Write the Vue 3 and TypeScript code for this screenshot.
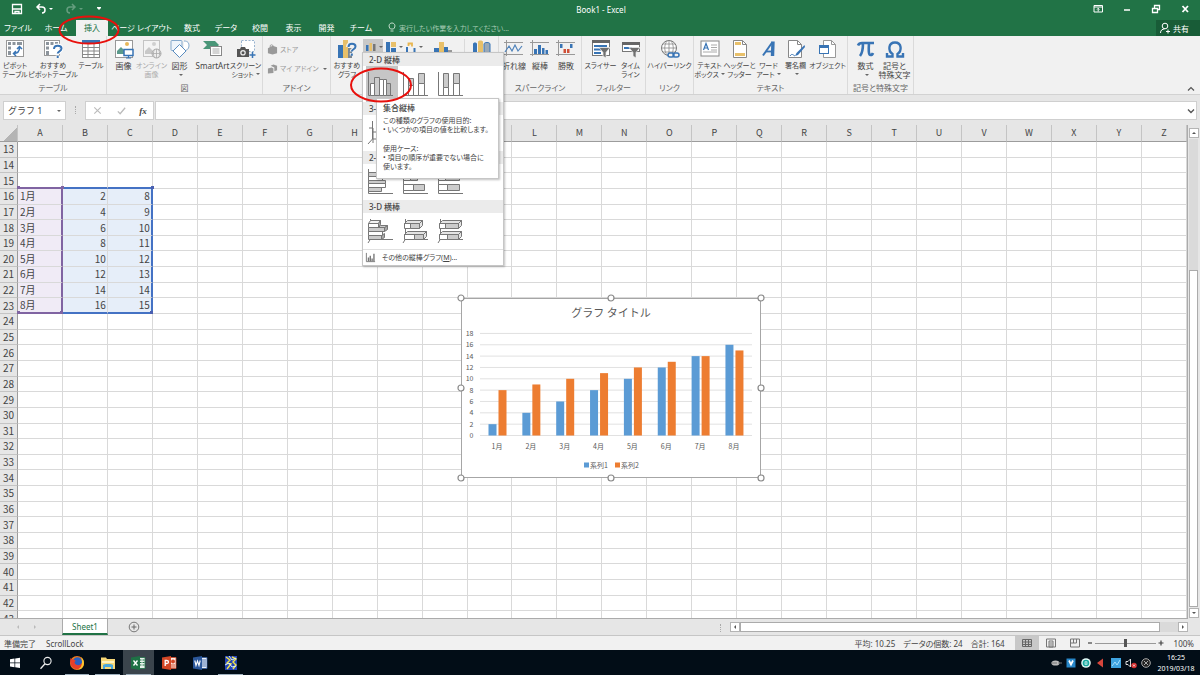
<script setup lang="ts">
import { ref } from 'vue'

interface Tool {
  icon: string
  lines: string[]
  size: string
  caret?: boolean
  muted?: boolean
  small?: boolean
}
interface Group {
  label: string
  tools: Tool[]
}

const tabs = ['ファイル', 'ホーム', '挿入', 'ページ レイアウト', '数式', 'データ', '校閲', '表示', '開発', 'チーム']

const leftGroups: Group[] = [
  {
    label: 'テーブル',
    tools: [
      { icon: 'pivot', lines: ['ピボット', 'テーブル'], size: 'w30', small: true },
      { icon: 'pivot-help', lines: ['おすすめ', 'ピボットテーブル'], size: 'w46', small: true },
      { icon: 'table', lines: ['テーブル'], size: 'w30', small: true },
    ],
  },
  {
    label: '図',
    tools: [
      { icon: 'picture', lines: ['画像'], size: 'w28' },
      { icon: 'online', lines: ['オンライン', '画像'], size: 'w28', muted: true, small: true },
      { icon: 'shapes', lines: ['図形', ''], size: 'w28', caret: true },
      { icon: 'smartart', lines: ['SmartArt'], size: 'w38' },
      { icon: 'shot', lines: ['スクリーン', 'ショット'], size: 'w28', caret: true, small: true },
    ],
  },
]

const rightGroups: Group[] = [
  {
    label: 'スパークライン',
    tools: [
      { icon: 'spark-line', lines: ['折れ線'], size: 'w26' },
      { icon: 'spark-bar', lines: ['縦棒'], size: 'w26' },
      { icon: 'spark-win', lines: ['勝敗'], size: 'w26' },
    ],
  },
  {
    label: 'フィルター',
    tools: [
      { icon: 'slicer', lines: ['スライサー'], size: 'w34', small: true },
      { icon: 'timeline', lines: ['タイム', 'ライン'], size: 'w26', small: true },
    ],
  },
  { label: 'リンク', tools: [{ icon: 'link', lines: ['ハイパーリンク'], size: 'w46', small: true }] },
  {
    label: 'テキスト',
    tools: [
      { icon: 'textbox', lines: ['テキスト', 'ボックス'], size: 'w30', caret: true, small: true },
      { icon: 'header', lines: ['ヘッダーと', 'フッター'], size: 'w30', small: true },
      { icon: 'wordart', lines: ['ワード', 'アート'], size: 'w28', caret: true, small: true },
      { icon: 'sign', lines: ['署名欄', ''], size: 'w26', caret: true, small: true },
      { icon: 'object', lines: ['オブジェクト'], size: 'w38', small: true },
    ],
  },
  {
    label: '記号と特殊文字',
    tools: [
      { icon: 'pi', lines: ['数式', ''], size: 'w28', caret: true },
      { icon: 'omega', lines: ['記号と', '特殊文字'], size: 'w30' },
    ],
  },
]

const menuSections = [
  { title: '2-D 縦棒', icons: ['col-cluster', 'col-stack', 'col-full'] },
  { title: '3-D 縦棒', icons: ['col3d'] },
  { title: '2-D 横棒', icons: ['row-cluster', 'row-stack', 'row-full'] },
  { title: '3-D 横棒', icons: ['row3d-cluster', 'row3d-stack', 'row3d-full'] },
]

const columns = 'ABCDEFGHIJKLMNOPQRSTUVWXYZ'.split('')
const rows = Array.from({ length: 31 }, (_, i) => i + 13)

const months = ['1月', '2月', '3月', '4月', '5月', '6月', '7月', '8月']
const seriesA = [2, 4, 6, 8, 10, 12, 14, 16]
const seriesB = [8, 9, 10, 11, 12, 13, 14, 15]

function cellText(row: number, col: string): string {
  const i = row - 16
  if (i < 0 || i >= months.length) return ''
  if (col === 'A') return months[i]
  if (col === 'B') return String(seriesA[i])
  if (col === 'C') return String(seriesB[i])
  return ''
}

function cellClass(row: number, col: string): string[] {
  const out: string[] = []
  if (!'ABC'.includes(col)) return out
  const cat = col === 'A'
  if (row >= 16 && row <= 23) {
    out.push(cat ? 'cat' : 'val')
    if (col === 'A') out.push('edge-cat')
    if (col === 'C') out.push('edge-val')
  }
  if (row === 15 || row === 23) {
    out.push(cat ? 'line-cat' : 'line-val')
    if (col !== 'B') out.push('knob')
    if (cat) out.push('knob-left')
  }
  return out
}

const ticks = [0, 2, 4, 6, 8, 10, 12, 14, 16, 18]
const base = 137.5
const unit = 5.67
const step = 33.85
const handles = [
  [4, 4], [154, 4], [304, 4], [4, 94], [304, 94], [4, 184], [154, 184], [304, 184],
]

const formula = ref('')
const zoom = ref(50)
const query = ref('')
const apps = [
  { id: 'start', state: '' },
  { id: 'search', state: '' },
  { id: 'firefox', state: 'open' },
  { id: 'explorer', state: 'open' },
  { id: 'excel', state: 'active' },
  { id: 'powerpoint', state: '' },
  { id: 'word', state: '' },
  { id: 'mosaic', state: 'open' },
]
const tray = ['t-plug', 't-v', 't-e', 't-arrow', 't-blue', 't-sound', 't-x']
</script>

<template>
  <div class="app">
    <svg class="sprite" aria-hidden="true">
      <symbol id="pivot" viewBox="0 0 20 20">
        <rect x="1.5" y="1.5" width="17" height="16" fill="#fff" stroke="#999" />
        <path d="M3 3h3v3H3zM7.500 3h3v3h-3zM12 3h5v3h-5zM3 7.500h3v3H3zM3 12h3v4H3z" fill="#8c949c" />
        <path d="M8.500 14.500c4 0 6-2 6-6M12 10l2.500-2.500L17 10M11 12l-2.500 2.500L11 17" fill="none" stroke="#3874b5" stroke-width="1.500" />
      </symbol>
      <symbol id="pivot-help" viewBox="0 0 20 20">
        <rect x="1.500" y="1.500" width="15" height="15" fill="#fff" stroke="#999" />
        <path d="M3 3h3v3H3zM7.500 3h3v3h-3zM12 3h3v3h-3zM3 7.500h3v3H3zM3 12h3v4H3z" fill="#8c949c" />
        <path d="M10.500 10c0-5 8-4.500 8-.5 0 3-3.800 2.800-3.800 5.500M14.700 16.500v2.500" fill="none" stroke="#fff" stroke-width="4" />
        <path d="M11 10c0-4.500 7.500-4 7.500-.5 0 3-3.800 2.500-3.800 5M14.700 16.800v2.200" fill="none" stroke="#3874b5" stroke-width="2" />
      </symbol>
      <symbol id="table" viewBox="0 0 20 20">
        <rect x="1.500" y="1.500" width="17" height="17" fill="#fff" stroke="#888" />
        <path d="M1 1h18v4H1z" fill="#3874b5" />
        <path d="M1 8.500h18M1 12h18M1 15.500h18M7 5v14M13 5v14" stroke="#888" />
      </symbol>
      <symbol id="picture" viewBox="0 0 20 20">
        <rect x="1.500" y="1.500" width="17" height="17" fill="#fff" stroke="#999" />
        <path d="M3 15V12l4-4 5 5v2z" fill="#5b9a8b" />
        <circle cx="13" cy="5" r="2" fill="#e8b75a" />
        <rect x="10" y="10.500" width="9" height="6" fill="#fff" stroke="#3874b5" stroke-width="1.500" />
        <path d="M14.500 16v2.500M12 19h5" stroke="#3874b5" stroke-width="1.200" />
      </symbol>
      <symbol id="online" viewBox="0 0 20 20">
        <rect x="1.500" y="1.500" width="16" height="16" fill="#f4f4f4" stroke="#c4c4c4" />
        <path d="M3 15V12l4-4 6 6v1z" fill="#c8c8c8" />
        <circle cx="12" cy="5" r="2" fill="#d0d0d0" />
        <circle cx="14.500" cy="14.500" r="4.500" fill="#eee" stroke="#aaa" />
        <path d="M10 14.500h9M14.500 10v9M12.500 10.500c-1.500 3-1.500 5 0 8M16.500 10.500c1.500 3 1.500 5 0 8" fill="none" stroke="#aaa" stroke-width=".8" />
      </symbol>
      <symbol id="shapes" viewBox="0 0 20 20">
        <rect x="1" y="1.500" width="11" height="10" rx="1" fill="#eef4fa" stroke="#85a9cc" />
        <path d="M14 2c4 0 5 2 5 5s-3 5-5 5" fill="#fff" stroke="#85a9cc" />
        <path d="m9.500 5.500 6.500 6.500-6.500 6.500L3 12z" fill="#fff" stroke="#5b8dc0" />
      </symbol>
      <symbol id="smartart" viewBox="0 0 20 20">
        <path d="M0 2h12l4 4-4 4H0l4-4z" fill="#4a9678" />
        <rect x="7.500" y="7.500" width="11" height="9" fill="#fff" stroke="#888" />
        <path d="M9.500 10h7M9.500 12h7M9.500 14h7" stroke="#aaa" />
      </symbol>
      <symbol id="shot" viewBox="0 0 20 20">
        <rect x="5.500" y="1.500" width="13" height="11" fill="#fff" stroke="#9ab4d0" stroke-dasharray="2 1.500" />
        <path d="M1 10h3l1-2h4l1 2h3v8H1z" fill="#555" />
        <circle cx="7" cy="13.700" r="2.800" fill="#eee" />
        <circle cx="7" cy="13.700" r="1.500" fill="#555" />
        <path d="M16.500 13v6M13.500 16h6" stroke="#3874b5" stroke-width="1.500" />
      </symbol>
      <symbol id="store" viewBox="0 0 12 12">
        <path d="M1 4.500 6 2l5 1.500V10L6 11.500 1 10z" fill="#999" />
        <path d="M3.500 4V2c0-1.500 3-1.500 3 0v1" fill="none" stroke="#999" />
      </symbol>
      <symbol id="addin" viewBox="0 0 12 12">
        <path d="M1 6 5 5l2 1v5l-6 .5zM4 3l3-1.500 4 1.500v5l-3 1V5z" fill="#999" />
      </symbol>
      <symbol id="chart-help" viewBox="0 0 20 20">
        <path d="M1 6h5v13H1z" fill="#3874b5" />
        <path d="M6 1h5v18H6z" fill="#e8c06a" />
        <path d="M11 9h4v10h-4z" fill="#7d8790" />
        <path d="M11 8c0-5 7.500-4.500 7.500-.5 0 3-3.700 2.500-3.700 5M14.800 14v2.500" fill="none" stroke="#f1f1f1" stroke-width="4" />
        <path d="M11.500 8c0-4.500 7-4 7-.5 0 3-3.700 2.500-3.700 5M14.800 14.500v2.300" fill="none" stroke="#3874b5" stroke-width="2" />
      </symbol>
      <symbol id="mini-col" viewBox="0 0 12 12">
        <path d="M1 4h2.500v6H1z" fill="#3874b5" /><path d="M4.500 2H7v8H4.500z" fill="#e8c06a" /><path d="M8 3h2.500v7H8z" fill="#777" />
      </symbol>
      <symbol id="mini-tree" viewBox="0 0 12 12">
        <path d="M1 1h4v10H1z" fill="#3874b5" /><path d="M6 1h5v5H6z" fill="#e8c06a" /><path d="M6 7h5v4H6z" fill="#3874b5" />
      </symbol>
      <symbol id="mini-fall" viewBox="0 0 12 12">
        <path d="M1 6h2v5H1z" fill="#3874b5" /><path d="M3.500 5V2.500H7v3" fill="none" stroke="#e8b650" stroke-width="1.800" /><path d="M8.500 7h2v4h-2z" fill="#3874b5" />
      </symbol>
      <symbol id="big-chart" viewBox="0 0 20 20">
        <path d="M1 9h5v6H1z" fill="#3874b5" /><path d="M6 3h5v12H6z" fill="#e8c06a" /><path d="M11 8h4v7h-4z" fill="#3874b5" /><path d="M15 11h4v4h-4z" fill="#999" />
      </symbol>
      <symbol id="map3d" viewBox="0 0 20 20">
        <path d="M1 5c0-2 4-2 4 0v10H1z" fill="#3874b5" /><path d="M6 3c0-2 5-2 5 0v12H6z" fill="#e8c06a" /><path d="M12 5c0-2 6-2 6 0v10h-6z" fill="#9aa9b8" stroke="#3874b5" />
      </symbol>
      <symbol id="spark-line" viewBox="0 0 20 20">
        <path d="M2.500 1v16M0 3.500h19M0 15.500h19" stroke="#999" fill="none" />
        <path d="M1 13l4-6 3 5 3-6 3 6 4-5" fill="none" stroke="#4f83bb" stroke-width="1.200" />
      </symbol>
      <symbol id="spark-bar" viewBox="0 0 20 20">
        <path d="M2.500 1v16M0 3.500h19M0 15.500h19" stroke="#999" />
        <path d="M4 10h3v5H4zM8 6h3v9H8zM12 9h2.500v6H12zM15.500 11h2.500v4h-2.500z" fill="#3874b5" />
      </symbol>
      <symbol id="spark-win" viewBox="0 0 20 20">
        <path d="M2.500 1v16M0 3.500h19M0 15.500h19" stroke="#999" />
        <path d="M4 5h2.500v4H4zM14 5h2.500v4H14z" fill="#3874b5" /><path d="M7.500 10H10v4H7.500zM11 10h2.500v4H11z" fill="#d05038" />
      </symbol>
      <symbol id="slicer" viewBox="0 0 20 20">
        <rect x="1.500" y="1.500" width="17" height="15" fill="#fff" stroke="#777" />
        <path d="M1 1h18v3H1z" fill="#666" /><path d="M3 6h13v2H3zM3 9.500h7v2H3zM3 13h7v2H3z" fill="#3874b5" />
        <path d="M8 8.500h11l-4 5V19l-3-2v-3.500z" fill="#707070" stroke="#f1f1f1" stroke-width=".7" />
      </symbol>
      <symbol id="timeline" viewBox="0 0 20 20">
        <rect x="1.500" y="3.500" width="17" height="9" fill="#fff" stroke="#777" />
        <path d="M1 3h18v3H1z" fill="#666" /><path d="M3 8h8v2H3z" fill="#3874b5" />
        <path d="M8 8.500h11l-4 5V19l-3-2v-3.500z" fill="#707070" stroke="#f1f1f1" stroke-width=".7" />
      </symbol>
      <symbol id="link" viewBox="0 0 20 20">
        <circle cx="9" cy="9" r="7.500" fill="#fff" stroke="#777" />
        <path d="M1.500 9h15M9 1.500v15M3 5h12M3 13h12M7 2c-3 4-3 10 0 14M11 2c3 4 3 10 0 14" fill="none" stroke="#888" stroke-width=".8" />
        <rect x="8" y="14" width="6" height="4" rx="2" fill="#f1f1f1" stroke="#3874b5" stroke-width="1.500" />
        <rect x="13" y="14" width="6" height="4" rx="2" fill="none" stroke="#3874b5" stroke-width="1.500" />
      </symbol>
      <symbol id="textbox" viewBox="0 0 20 20">
        <rect x="1" y="2" width="18" height="15" fill="#fff" stroke="#888" />
        <path d="M3.500 11 6 4.500 8.500 11M4.500 9h3" fill="none" stroke="#3874b5" stroke-width="1.200" />
        <path d="M11 6h6M11 8.500h6M11 11h6M3 13h14" stroke="#aaa" />
      </symbol>
      <symbol id="header" viewBox="0 0 20 20">
        <path d="M3.500 1.500h9l4 4v13h-13z" fill="#fff" stroke="#888" /><path d="M12.500 1.500v4h4" fill="none" stroke="#888" />
        <path d="M5 3h6v3H5zM5 14h10v3H5z" fill="#e8c06a" />
      </symbol>
      <symbol id="wordart" viewBox="0 0 20 20">
        <path d="M4 16.500 13.500 3" fill="none" stroke="#3874b5" stroke-width="2" /><path d="M14 2.500 13.500 17" fill="none" stroke="#3874b5" stroke-width="3.400" /><path d="M7 12.500h6" stroke="#3874b5" stroke-width="1.800" />
      </symbol>
      <symbol id="sign" viewBox="0 0 20 20">
        <path d="M2.500 1.500h9l4 4v13h-13z" fill="#fff" stroke="#888" /><path d="M11.500 1.500v4h4" fill="none" stroke="#888" />
        <path d="m18.500 6-8 8-1.500 3 3-1 7-8z" fill="#3874b5" /><path d="M4 17c2-3 3-1 5 0" fill="none" stroke="#3874b5" />
      </symbol>
      <symbol id="object" viewBox="0 0 20 20">
        <path d="M5.500 1.500h8l4 4v13h-12z" fill="#fff" stroke="#999" /><path d="M13.500 1.500v4h4" fill="none" stroke="#999" />
        <rect x="1.500" y="6.500" width="9" height="8" fill="#fff" stroke="#3874b5" /><path d="M1 6h10v3H1z" fill="#3874b5" />
      </symbol>
      <symbol id="pi" viewBox="0 0 20 20">
        <path d="M2 6.500C3 4 4 4 6 4h12M7 4c0 6-.5 10-3 13M13 4c-.5 7-.5 12 1.500 12 1 0 2-.5 2.500-2" fill="none" stroke="#3874b5" stroke-width="2.600" />
      </symbol>
      <symbol id="omega" viewBox="0 0 20 20">
        <path d="M2 14v3.500h5.500V15C3 12 3 3.500 10 3.500S17 12 12.500 15v2.500H18V14" fill="none" stroke="#3874b5" stroke-width="2.400" />
      </symbol>
      <symbol id="col-cluster" viewBox="0 0 28 28">
        <path d="M2.500 2v23.500H27" fill="none" stroke="#777" />
        <path d="M4.500 13.500h4v12h-4zM13.500 9.500h4v16h-4z" fill="#fff" stroke="#777" />
        <path d="M8.500 7.500h5v18h-5z" fill="#ccc" stroke="#777" /><path d="M17.500 9.500h3v16h-3z" fill="#fff" stroke="#777" /><path d="M20.500 13.500h4v12h-4z" fill="#bbb" stroke="#777" />
      </symbol>
      <symbol id="col-stack" viewBox="0 0 28 28">
        <path d="M2.500 2v23.500H27" fill="none" stroke="#777" />
        <path d="M7.500 15.500h5v10h-5zM17.500 13.500h6v12h-6z" fill="#fff" stroke="#777" /><path d="M7.500 8.500h5v7h-5zM17.500 3.500h6v10h-6z" fill="#ccc" stroke="#777" />
      </symbol>
      <symbol id="col-full" viewBox="0 0 28 28">
        <path d="M2.500 2v23.500H27" fill="none" stroke="#777" />
        <path d="M7.500 17.500h5v8h-5zM17.500 13.500h6v12h-6z" fill="#fff" stroke="#777" /><path d="M7.500 3.500h5v14h-5zM17.500 3.500h6v10h-6z" fill="#ccc" stroke="#777" />
      </symbol>
      <symbol id="col3d" viewBox="0 0 28 28">
        <path d="M6.500 2v18L2 25M6.500 20H26M3 9h4v15M7 13h5v10" fill="none" stroke="#777" />
      </symbol>
      <symbol id="row-cluster" viewBox="0 0 28 28">
        <path d="M2.500 1v24.500H27" fill="none" stroke="#777" />
        <path d="M2.500 8.500h14v4h-14zM2.500 15.500h17v4h-17z" fill="#fff" stroke="#777" /><path d="M2.500 4.500h12v4h-12zM2.500 12.500h17v3h-17zM2.500 19.500h13v4h-13z" fill="#ccc" stroke="#777" />
      </symbol>
      <symbol id="row-stack" viewBox="0 0 28 28">
        <path d="M2.500 1v24.500H27" fill="none" stroke="#777" />
        <path d="M2.500 6.500h7v6h-7zM2.500 16.500h10v6h-10z" fill="#fff" stroke="#777" /><path d="M9.500 6.500h7v6h-7zM12.500 16.500h11v6h-11z" fill="#ccc" stroke="#777" />
      </symbol>
      <symbol id="row-full" viewBox="0 0 28 28">
        <path d="M2.500 1v24.500H27" fill="none" stroke="#777" />
        <path d="M2.500 6.500h7v6h-7zM2.500 16.500h9v6h-9z" fill="#fff" stroke="#777" /><path d="M9.500 6.500h14v6h-14zM11.500 16.500h12v6h-12z" fill="#ccc" stroke="#777" />
      </symbol>
      <symbol id="row3d-cluster" viewBox="0 0 28 28">
        <path d="M4.500 2v20L2 26M5 22.500h22" fill="none" stroke="#777" />
        <path d="m2.500 6.500 2-3h10l-2 3zM2.500 14.500l2-2h15l-3 2z" fill="#f4f4f4" stroke="#777" />
        <path d="m12.500 6.500 2-3v4l-2 3zM18.500 10.500l3-2v4l-3 2zM15.500 18.500l3-2v4l-3 2z" fill="#aaa" stroke="#777" />
        <path d="M2.500 6.500h10v4h-10zM2.500 14.500h14v4h-14z" fill="#fff" stroke="#777" />
        <path d="M2.500 10.500h16v4h-16zM2.500 18.500h13v4h-13zM12.500 10.500l2-2h7l-3 2z" fill="#ccc" stroke="#777" />
      </symbol>
      <symbol id="row3d-stack" viewBox="0 0 28 28">
        <path d="M4.500 2v20L2 26M5 22.500h22" fill="none" stroke="#777" />
        <path d="M3.500 6.500h6v5h-6zM3.500 17.500h10v5h-10z" fill="#fff" stroke="#777" /><path d="M9.500 6.500h9v5h-9zM13.500 17.500h9v5h-9z" fill="#ccc" stroke="#777" />
        <path d="m3.500 6.500 3-3h15l-3 3zm15 0 3-3v5l-3 3zM3.500 17.500l3-3h19l-3 3zm19 0 3-3v5l-3 3z" fill="#e4e4e4" stroke="#777" />
      </symbol>
      <symbol id="row3d-full" viewBox="0 0 28 28">
        <path d="M4.500 2v20L2 26M5 22.500h22" fill="none" stroke="#777" />
        <path d="M3.500 6.500h6v5h-6zM3.500 17.500h8v5h-8z" fill="#fff" stroke="#777" /><path d="M9.500 6.500h13v5h-13zM11.500 17.500h11v5h-11z" fill="#ccc" stroke="#777" />
        <path d="m3.500 6.500 3-3h19l-3 3zm19 0 3-3v5l-3 3zM3.500 17.500l3-3h19l-3 3zm19 0 3-3v5l-3 3z" fill="#e4e4e4" stroke="#777" />
      </symbol>
      <symbol id="more-chart" viewBox="0 0 12 12">
        <path d="M1.500 1v9.500H11" fill="none" stroke="#777" /><path d="M3 6h1.500v4H3zM5 4h1.500v6H5zM7 7h1.500v3H7zM9 2h1.500v8H9z" fill="#777" />
      </symbol>
      <symbol id="start" viewBox="0 0 16 16">
        <path d="m3 4.200 4.500-.7v4H3zM8.200 3.400 13 2.700v4.800H8.200zM3 8.200h4.500v4L3 11.500zM8.200 8.200H13V13l-4.800-.7z" fill="#fff" />
      </symbol>
      <symbol id="search" viewBox="0 0 16 16">
        <circle cx="9.500" cy="6" r="3.600" fill="none" stroke="#eee" stroke-width="1.100" /><path d="m7 8.700-4.500 5" stroke="#eee" stroke-width="1.300" />
      </symbol>
      <symbol id="firefox" viewBox="0 0 16 16">
        <circle cx="8" cy="8" r="7" fill="#f07a1c" /><circle cx="8.500" cy="6.800" r="4.600" fill="#2b5fc0" />
        <path d="M1.500 3C3 5 5 4 7 6c-2 0-2 3 1 4 2 .5 4-.5 5-2 0 4-3 6.500-6 6C2 13.500.5 8 1.500 3z" fill="#e8402a" /><path d="M12 2c4 3 4 9 0 12-1 0-2 .5-3 .5 4-2 5-7 3-12.500z" fill="#fcc52e" />
      </symbol>
      <symbol id="explorer" viewBox="0 0 16 16">
        <path d="M1 2.500h5l1 1.500h8v10H1z" fill="#f6d777" /><path d="M2 6h12v2H2z" fill="#fff3c0" /><path d="M3 14v-4c0-1.500 10-1.500 10 0v4h-2v-2H5v2z" fill="#4aa7dc" />
      </symbol>
      <symbol id="excel" viewBox="0 0 16 16">
        <path d="M8 2.500h7v11H8z" fill="#e6f1ea" stroke="#1e7145" stroke-width=".8" /><path d="M9.500 5h2M12.500 5h2M9.500 7.500h2M12.500 7.500h2M9.500 10h2M12.500 10h2" stroke="#1e7145" /><path d="m1 2.500 9-1.500v14l-9-1.500z" fill="#1e7145" /><path d="m3.500 5.500 4 5M7.500 5.500l-4 5" stroke="#fff" stroke-width="1.300" />
      </symbol>
      <symbol id="powerpoint" viewBox="0 0 16 16">
        <path d="M8 2.500h7v11H8z" fill="#fbeae5" stroke="#d24726" stroke-width=".8" /><circle cx="12" cy="6.500" r="2" fill="#d24726" /><path d="M10 10h4M10 12h4" stroke="#d24726" /><path d="m1 2.500 9-1.500v14l-9-1.500z" fill="#d24726" /><path d="M4.200 11V5.500h1.500c2.400 0 2.400 3 0 3H4.500" fill="none" stroke="#fff" stroke-width="1.300" />
      </symbol>
      <symbol id="word" viewBox="0 0 16 16">
        <path d="M8 2.500h7v11H8z" fill="#e8eef8" stroke="#2b579a" stroke-width=".8" /><path d="M10 5h4M10 7h4M10 9h4M10 11h4" stroke="#2b579a" stroke-width=".8" /><path d="m1 2.500 9-1.500v14l-9-1.500z" fill="#2b579a" /><path d="m2.800 5.500 1.200 5 1.500-4.500L7 10.500l1.200-5" fill="none" stroke="#fff" stroke-width="1.100" />
      </symbol>
      <symbol id="mosaic" viewBox="0 0 16 16">
        <path d="M2 1h12v14H2z" fill="#2443b8" /><path d="m3 2 4 3-3 3 4 1-4 5M9 2l4 2-3 3 3 3-3 4" fill="none" stroke="#f3e444" stroke-width="1.400" /><path d="m6 1 3 4 4-2M2 10l4-2 3 4 4-1" fill="none" stroke="#d8f0ff" />
      </symbol>
      <symbol id="t-plug" viewBox="0 0 12 12"><ellipse cx="5.500" cy="6" rx="4" ry="2.600" fill="#bbb" /><path d="M8 6h4M1 6h6" stroke="#777" /></symbol>
      <symbol id="t-v" viewBox="0 0 12 12"><path d="M1.500 1.500h9v9h-9z" fill="#2787c9" /><path d="m4 3.500 2 4 2-4" fill="none" stroke="#fff" stroke-width="1.700" /></symbol>
      <symbol id="t-e" viewBox="0 0 12 12"><circle cx="6" cy="6" r="4.800" fill="#e6fbf8" /><circle cx="6" cy="6" r="2.600" fill="none" stroke="#18a9a0" stroke-width="1.500" /><path d="M4 6h4" stroke="#18a9a0" /></symbol>
      <symbol id="t-arrow" viewBox="0 0 12 12"><path d="M2 6 8 1.500v9z" fill="#d8463c" /></symbol>
      <symbol id="t-blue" viewBox="0 0 12 12"><path d="M1 1h10v10H1z" fill="#3fa4e0" /><path d="m2 9 3-4 2 3 3-5" fill="none" stroke="#a5e0ff" /></symbol>
      <symbol id="t-sound" viewBox="0 0 12 12"><path d="M1 4.500h2L5.500 2v8L3 7.500H1z" fill="none" stroke="#ddd" /><circle cx="9" cy="8.500" r="2.800" fill="#d22c2c" /><path d="m8 7.500 2 2m0-2-2 2" stroke="#fff" stroke-width=".8" /></symbol>
      <symbol id="t-x" viewBox="0 0 12 12"><circle cx="6" cy="6" r="4.300" fill="#222" stroke="#aaa" /><path d="m4 4 4 4m0-4-4 4" stroke="#aaa" /></symbol>
    </svg>

    <header class="titlebar">
      <div class="quick">
        <button aria-label="上書き保存"><svg viewBox="0 0 12 12"><path d="M1.500 1.500h9v9h-9zM1.500 6h9M4 10V8.500h4V10" fill="none" stroke="#fff" stroke-width="1.300" /></svg></button>
        <button aria-label="元に戻す"><svg viewBox="0 0 12 12"><path d="M5 1 2 4l3 3M2 4h5c4 0 4 6 0 6" fill="none" stroke="#fff" stroke-width="1.500" /></svg><i class="caret light"></i></button>
        <button class="dim" aria-label="やり直し"><svg viewBox="0 0 12 12"><path d="m7 1 3 3-3 3M10 4H5C1 4 1 10 5 10" fill="none" stroke="#fff" stroke-width="1.500" /></svg><i class="caret light"></i></button>
        <button aria-label="カスタマイズ"><i class="caret light bar"></i></button>
      </div>
      <h1>Book1 - Excel</h1>
      <div class="window">
        <button aria-label="リボンの表示"><svg viewBox="0 0 12 12"><path d="M2 2.500h8.500v6.500H2zM2 4h8.500M6.200 8.500v-3M5 6.500l1.200-1.200 1.200 1.200" fill="none" stroke="#fff" /></svg></button>
        <button aria-label="最小化"><svg viewBox="0 0 12 12"><path d="M3 7h6" stroke="#fff" stroke-width="1.500" /></svg></button>
        <button aria-label="元のサイズ"><svg viewBox="0 0 12 12"><path d="M2.500 5.500h5v4h-5zM4.500 5V2.500h5v4H8" fill="none" stroke="#fff" stroke-width="1.300" /></svg></button>
        <button aria-label="閉じる"><svg viewBox="0 0 12 12"><path d="m3.500 3 5.500 6M9 3 3.500 9" stroke="#fff" stroke-width="1.800" /></svg></button>
      </div>
    </header>

    <nav class="tabs">
      <button v-for="tab in tabs" :key="tab" :class="{ current: tab === '挿入' }">{{ tab }}</button>
      <label class="tell">
        <svg viewBox="0 0 10 12"><path d="M3.500 8C1 5.500 2 2 5 2s4 3.500 1.500 6zM3.500 10h3" fill="none" stroke="#c2dccb" /></svg>
        <input v-model="query" aria-label="操作アシスト" placeholder="実行したい作業を入力してください..." />
      </label>
      <button class="share"><svg viewBox="0 0 12 12"><circle cx="6" cy="4" r="2.800" fill="none" stroke="#fff" /><path d="M1.500 11c0-3 2-4 4-4M7 9.500h4M9 7.500v4" fill="none" stroke="#fff" /></svg>共有</button>
    </nav>

    <section class="ribbon">
      <div v-for="group in leftGroups" :key="group.label" class="group">
        <div class="tools">
          <button v-for="tool in group.tools" :key="tool.icon" class="tool" :class="[tool.size, { muted: tool.muted, small: tool.small }]">
            <svg><use :href="'#' + tool.icon" /></svg>
            <span v-for="(line, n) in tool.lines" :key="n">{{ line }}<i v-if="tool.caret && n === tool.lines.length - 1" class="caret"></i></span>
          </button>
        </div>
        <h2>{{ group.label }}</h2>
      </div>
      <div class="group">
        <div class="stack">
          <button><svg><use href="#store" /></svg>ストア</button>
          <button><svg><use href="#addin" /></svg>マイ アドイン<i class="caret"></i></button>
        </div>
        <h2>アドイン</h2>
      </div>
      <div class="group charts">
        <div class="tools">
          <button class="tool small w34"><svg><use href="#chart-help" /></svg><span>おすすめ</span><span>グラフ</span></button>
          <div class="minis">
            <button class="pressed" aria-label="縦棒/横棒グラフ"><svg><use href="#mini-col" /></svg><i class="caret"></i></button>
            <button aria-label="階層構造グラフ"><svg><use href="#mini-tree" /></svg><i class="caret"></i></button>
            <button aria-label="ウォーターフォール図"><svg><use href="#mini-fall" /></svg><i class="caret"></i></button>
          </div>
          <button class="tool w34" aria-label="ピボットグラフ"><svg><use href="#big-chart" /></svg></button>
          <button class="tool w34 split" aria-label="3D マップ"><svg><use href="#map3d" /></svg></button>
        </div>
      </div>
      <div v-for="group in rightGroups" :key="group.label" class="group">
        <div class="tools">
          <button v-for="tool in group.tools" :key="tool.icon" class="tool" :class="[tool.size, { small: tool.small }]">
            <svg><use :href="'#' + tool.icon" /></svg>
            <span v-for="(line, n) in tool.lines" :key="n">{{ line }}<i v-if="tool.caret && n === tool.lines.length - 1" class="caret"></i></span>
          </button>
        </div>
        <h2>{{ group.label }}</h2>
      </div>
      <button class="fold" aria-label="リボンを折りたたむ"><svg viewBox="0 0 10 10"><path d="m2 6.500 3-3 3 3" fill="none" stroke="#555" stroke-width="1.200" /></svg></button>
    </section>

    <section class="formula">
      <button class="namebox">グラフ 1<i class="caret"></i></button>
      <span class="grip"></span>
      <div class="fx">
        <button aria-label="キャンセル"><svg viewBox="0 0 12 12"><path d="m2.500 2.500 7 7m0-7-7 7" stroke="#bbb" stroke-width="1.200" /></svg></button>
        <button aria-label="入力"><svg viewBox="0 0 12 12"><path d="m2 7 2.500 2.500L10 3" fill="none" stroke="#bbb" stroke-width="1.400" /></svg></button>
        <button aria-label="関数の挿入"><em>fx</em></button>
      </div>
      <div class="entry">
        <input v-model="formula" aria-label="数式バー" />
        <svg viewBox="0 0 10 10"><path d="m2 3.500 3 3 3-3" fill="none" stroke="#555" stroke-width="1.400" /></svg>
      </div>
    </section>

    <main class="work">
      <div class="sheet">
        <table>
          <thead>
            <tr>
              <th class="corner"></th>
              <th v-for="col in columns" :key="col" scope="col">{{ col }}</th>
            </tr>
          </thead>
          <tbody>
            <tr v-for="row in rows" :key="row">
              <th scope="row">{{ row }}</th>
              <td v-for="col in columns" :key="col" :class="cellClass(row, col)">{{ cellText(row, col) }}</td>
            </tr>
          </tbody>
        </table>

        <svg class="chart" viewBox="0 0 308 188" role="img" aria-label="グラフ タイトル">
          <rect x="4.500" y="4.500" width="299" height="179" fill="#fff" stroke="#a6a6a6" />
          <text x="154" y="23" class="chart-title">グラフ タイトル</text>
          <g transform="translate(4 4)">
            <g v-for="t in ticks" :key="t">
              <path :d="`M19 ${base - t * unit}h272`" stroke="#d9d9d9" stroke-width="0.8" />
              <text x="12.500" :y="base - t * unit + 2.5" class="tick">{{ t }}</text>
            </g>
            <g v-for="(m, i) in months" :key="m">
              <rect :x="27.5 + i * step" :y="base - seriesA[i] * unit" width="8" :height="seriesA[i] * unit" fill="#5b9bd5" />
              <rect :x="37.5 + i * step" :y="base - seriesB[i] * unit" width="8" :height="seriesB[i] * unit" fill="#ed7d31" />
              <text :x="36 + i * step" y="151" class="month">{{ m }}</text>
            </g>
            <rect x="123" y="164.500" width="5" height="5" fill="#5b9bd5" />
            <text x="129" y="169.500" class="legend">系列1</text>
            <rect x="154" y="164.500" width="5" height="5" fill="#ed7d31" />
            <text x="160" y="169.500" class="legend">系列2</text>
          </g>
          <circle v-for="(h, i) in handles" :key="i" :cx="h[0]" :cy="h[1]" r="3" fill="#fff" stroke="#8a8a8a" stroke-width="1.200" />
        </svg>
      </div>
      <div class="vscroll">
        <button aria-label="上へ"><i class="up"></i></button>
        <div class="vtrack"><div class="vthumb"></div></div>
        <button aria-label="下へ"><i class="down"></i></button>
      </div>
    </main>

    <section class="sheetbar">
      <div class="steps"><i class="left pale"></i><i class="right pale"></i></div>
      <button class="sheet-tab">Sheet1</button>
      <button class="add" aria-label="新しいシート"><svg viewBox="0 0 12 12"><circle cx="6" cy="6" r="4.800" fill="none" stroke="#777" /><path d="M3.500 6h5M6 3.500v5" stroke="#666" /></svg></button>
      <span class="grip"></span>
      <div class="hscroll">
        <button aria-label="左へ"><i class="left"></i></button>
        <div class="htrack"><div class="hthumb"></div></div>
        <button aria-label="右へ"><i class="right"></i></button>
      </div>
    </section>

    <footer class="status">
      <span>準備完了</span><span>ScrollLock</span>
      <span class="stats"><span>平均: 10.25</span><span>データの個数: 24</span><span>合計: 164</span></span>
      <div class="views">
        <button class="on" aria-label="標準"><svg viewBox="0 0 12 12"><path d="M1.500 2.500h9v7h-9zM1.500 5h9M1.500 7.500h9M4.500 2.500v7M7.500 2.500v7" fill="none" stroke="#666" /></svg></button>
        <button aria-label="ページ レイアウト"><svg viewBox="0 0 12 12"><path d="M1.500 2h9v8h-9zM4 4h4v6H4zM4.500 6h3M4.500 8h3" fill="none" stroke="#777" /></svg></button>
        <button aria-label="改ページ プレビュー"><svg viewBox="0 0 12 12"><path d="M1.500 2h9v8h-9zM1.500 6h6V2M4.500 2v4" fill="none" stroke="#777" /></svg></button>
      </div>
      <div class="zoom">
        <button aria-label="縮小"><svg viewBox="0 0 6 6"><path d="M1 3h4" stroke="#444" stroke-width="1.200" /></svg></button>
        <input v-model="zoom" type="range" min="0" max="100" aria-label="ズーム" />
        <button aria-label="拡大"><svg viewBox="0 0 6 6"><path d="M.5 3h5M3 .5v5" stroke="#444" stroke-width="1.200" /></svg></button>
      </div>
      <span class="percent">100%</span>
    </footer>

    <div class="taskbar">
      <div class="apps">
        <button v-for="app in apps" :key="app.id" :class="app.state" :aria-label="app.id"><svg><use :href="'#' + app.id" /></svg></button>
      </div>
      <div class="tray"><svg v-for="t in tray" :key="t"><use :href="'#' + t" /></svg></div>
      <div class="clock"><span>16:25</span><span>2019/03/18</span></div>
    </div>

    <div class="menu">
      <section v-for="(s, i) in menuSections" :key="s.title">
        <h3>{{ s.title }}</h3>
        <div class="choices">
          <button v-for="(icon, n) in s.icons" :key="n" :class="{ hover: i === 0 && n === 0 }" :aria-label="s.title"><svg><use :href="'#' + icon" /></svg></button>
        </div>
      </section>
      <button class="more"><svg><use href="#more-chart" /></svg><span>その他の縦棒グラフ(<u>M</u>)...</span></button>
    </div>
    <div class="tip" role="tooltip">
      <strong>集合縦棒</strong>
      <p>この種類のグラフの使用目的:<br />• いくつかの項目の値を比較します。</p>
      <p>使用ケース:<br />• 項目の順序が重要でない場合に<br />使います。</p>
    </div>
    <svg class="ring ring-tab" viewBox="0 0 64 30"><ellipse cx="32" cy="15" rx="29.500" ry="13.500" fill="none" stroke="#e8100c" stroke-width="2" /></svg>
    <svg class="ring ring-item" viewBox="0 0 64 38"><ellipse cx="32" cy="19" rx="30" ry="16.500" fill="none" stroke="#e8100c" stroke-width="2" /></svg>
  </div>
</template>

<style>
html,
body {
  margin: 0;
  overflow: hidden;
}
</style>

<style scoped>
* {
  box-sizing: border-box;
}
.app {
  position: relative;
  display: flex;
  flex-direction: column;
  height: 100vh;
  background: #e6e6e6;
  color: #444;
  font: 8px/9px 'Noto Sans', 'Noto Sans CJK JP', sans-serif;
  font-feature-settings: 'palt';
}
.sprite {
  position: absolute;
  width: 0;
  height: 0;
}
button,
input {
  margin: 0;
  padding: 0;
  border: 0;
  background: none;
  color: inherit;
  font: inherit;
  font-feature-settings: inherit;
  white-space: nowrap;
}
h1,
h2,
h3,
p {
  margin: 0;
  font: inherit;
}
svg {
  flex: none;
}
.caret {
  display: inline-block;
  margin-left: 2px;
  vertical-align: 2px;
  border: 2px solid transparent;
  border-top-color: #666;
  border-bottom: 0;
}
.caret.light {
  border-top-color: #fff;
}
.titlebar {
  display: flex;
  align-items: center;
  height: 18px;
  background: #217346;
  color: #fff;
}
.quick {
  display: flex;
  flex: 1;
  gap: 12px;
  padding-left: 11px;
}
.quick button {
  display: flex;
  align-items: center;
}
.quick svg,
.window svg {
  width: 12px;
  height: 12px;
}
.dim {
  opacity: 0.3;
}
.bar {
  position: relative;
}
.bar::before {
  content: '';
  position: absolute;
  left: -2px;
  top: -3px;
  width: 4px;
  height: 1px;
  background: #fff;
}
.window {
  display: flex;
  flex: 1;
  justify-content: flex-end;
  gap: 17px;
  padding-right: 9px;
}
.window svg {
  display: block;
}
.tabs {
  display: grid;
  grid-template-columns: 36px 40px 32px 67px 34px 34px 34px 33px 33px 36px 1fr 44px;
  height: 18px;
  background: #217346;
  color: #fff;
}
.current {
  margin-top: 2px;
  padding-bottom: 2px;
  background: #f1f1f1;
  color: #217346;
}
.tell {
  display: flex;
  align-items: center;
  padding-left: 8px;
}
.tell svg {
  width: 10px;
  height: 12px;
}
.tell input {
  width: 140px;
  margin-left: 2px;
}
.tell input::placeholder {
  color: #a6cbb4;
  font-size: 7px;
}
.share {
  display: flex;
  align-items: center;
  gap: 2px;
  margin-top: 2px;
  padding-left: 3px;
  background: #185c37;
}
.share svg {
  width: 12px;
  height: 12px;
}
.ribbon {
  display: grid;
  grid-template-columns: 107px 156px 68px 168px 83px 64px 48px 154px 66px 1fr;
  height: 59px;
  background: #f1f1f1;
  border-bottom: 1px solid #d2d2d2;
}
.group {
  display: flex;
  flex-direction: column;
  padding: 3px 0 1px;
  border-right: 1px solid #dadada;
}
.tools {
  display: flex;
  justify-content: center;
}
.group h2 {
  margin-top: auto;
  line-height: 11px;
  text-align: center;
  color: #666;
}
.tool {
  display: flex;
  flex-direction: column;
  align-items: center;
}
.small {
  font-size: 7px;
}
.tool svg {
  width: 20px;
  height: 20px;
  margin-bottom: 2px;
}
.tool span {
  height: 9px;
}
.muted {
  color: #aaa;
}
.w26 {
  width: 26px;
}
.w28 {
  width: 28px;
}
.w30 {
  width: 30px;
}
.w34 {
  width: 34px;
}
.w38 {
  width: 38px;
}
.w46 {
  width: 46px;
}
.stack {
  display: flex;
  flex-direction: column;
  gap: 8px;
  padding: 5px 0 0 4px;
  color: #999;
  font-size: 7px;
}
.stack button {
  display: flex;
  align-items: center;
  gap: 2px;
}
.stack svg {
  width: 11px;
  height: 11px;
}
.charts .tools {
  justify-content: flex-start;
}
.minis {
  display: flex;
  width: 62px;
  margin-right: 2px;
}
.charts .tools > .tool.w34:first-child {
  width: 32px;
}
.minis button {
  display: flex;
  align-items: center;
  width: 20px;
  height: 16px;
  padding-left: 1px;
}
.minis .caret {
  margin-left: 1px;
}
.minis svg {
  width: 14px;
  height: 12px;
}
.pressed {
  background: #c8c8c8;
}
.split {
  margin-left: 4px;
  border-left: 1px solid #dadada;
}
.fold {
  justify-self: end;
  align-self: end;
  margin-right: 4px;
}
.fold svg,
.entry svg {
  display: block;
  width: 10px;
  height: 10px;
}
.formula {
  display: flex;
  align-items: stretch;
  height: 30px;
  padding: 6px 3px 5px;
}
.namebox {
  display: flex;
  align-items: center;
  justify-content: space-between;
  width: 63px;
  padding: 0 4px;
  border: 1px solid #cfcfcf;
  background: #fff;
  font-size: 9px;
  font-feature-settings: normal;
}
.grip {
  width: 1px;
  height: 8px;
  margin: 5px 9px 0;
  border-left: 1px dotted #aaa;
}
.fx {
  display: flex;
  justify-content: space-around;
  align-items: center;
  width: 69px;
  margin-right: 1px;
  border: 1px solid #cfcfcf;
  background: #fff;
}
.fx svg {
  display: block;
  width: 11px;
  height: 11px;
}
.fx em {
  font: italic bold 9px/10px 'Liberation Serif', serif;
}
.entry {
  display: flex;
  flex: 1;
  align-items: center;
  border: 1px solid #cfcfcf;
  background: #fff;
}
.entry input {
  flex: 1;
}
.work {
  display: flex;
  flex: 1;
  min-height: 0;
}
.sheet {
  position: relative;
  flex: 1;
  overflow: hidden;
  border-bottom: 1px solid #ababab;
}
table {
  width: 100%;
  height: 502px;
  table-layout: fixed;
  border-collapse: separate;
  border-spacing: 0;
  font: 10px/12px 'Noto Sans CJK JP', sans-serif;
}
th,
td {
  height: 14px;
  padding: 0;
  border-right: 1px solid #d9d9d9;
  border-bottom: 1px solid #d9d9d9;
  font-weight: 400;
  overflow: visible;
}
td {
  position: relative;
  background: #fff;
  text-align: right;
  padding-right: 1px;
}
th {
  background: #e6e6e6;
  border-color: #c4c4c4;
  text-align: center;
}
thead th {
  height: 17px;
  font-size: 9px;
  border-bottom-color: #9c9c9c;
}
tbody th {
  border-right-color: #9c9c9c;
}
.corner {
  width: 18px;
  background: linear-gradient(135deg, transparent 60%, #b4b4b4 60%);
}
.cat {
  background: #f0ebf6;
  text-align: left;
  padding-left: 2px;
}
.val {
  background: #e6eef9;
}
.edge-cat {
  border-right: 2px solid #8064a2;
}
.edge-val {
  border-right: 2px solid #4472c4;
}
.line-cat {
  border-bottom: 2px solid #8064a2;
}
.line-val {
  border-bottom: 2px solid #4472c4;
}
.knob::after,
.knob-left::before {
  content: '';
  position: absolute;
  z-index: 1;
  right: -2px;
  bottom: -2px;
  width: 3px;
  height: 3px;
  background: #4a5fb0;
}
.knob-left::after,
.knob-left::before {
  background: #8064a2;
}
.knob-left::before {
  right: auto;
  left: -1px;
}
.chart {
  position: absolute;
  left: 457px;
  top: 169px;
  width: 308px;
  height: 188px;
  font-family: 'Noto Sans CJK JP', sans-serif;
  font-feature-settings: normal;
  fill: #595959;
}
.chart-title {
  font-size: 11px;
  text-anchor: middle;
}
.tick,
.month,
.legend {
  font-size: 7px;
}
.tick {
  text-anchor: end;
}
.month {
  text-anchor: middle;
}
.vscroll {
  display: flex;
  flex-direction: column;
  gap: 1px;
  width: 13px;
  padding: 3px 2px 1px 1px;
  border-left: 1px solid #ababab;
}
.vscroll button,
.hscroll button {
  display: grid;
  place-items: center;
  width: 10px;
  height: 10px;
  border: 1px solid #b4b4b4;
  background: #fff;
}
.vtrack {
  flex: 1;
  display: flex;
  align-items: flex-end;
  background: #dadada;
}
.vthumb {
  width: 10px;
  height: 72%;
  border: 1px solid #ababab;
  background: #fff;
}
.up,
.down,
.left,
.right {
  border: 2px solid transparent;
}
.up {
  border-bottom-color: #555;
  border-top: 0;
}
.down {
  border-top-color: #555;
  border-bottom: 0;
}
.left {
  border-right-color: #555;
  border-left: 0;
}
.right {
  border-left-color: #555;
  border-right: 0;
}
.pale {
  opacity: 0.3;
}
.sheetbar {
  display: flex;
  height: 17px;
  border-bottom: 1px solid #c6c6c6;
}
.steps {
  display: flex;
  align-items: center;
  gap: 15px;
  width: 62px;
  padding-left: 17px;
}
.sheet-tab {
  width: 46px;
  height: 16px;
  border: 1px solid #ababab;
  border-top: 0;
  border-bottom: 2px solid #217346;
  background: #fff;
  color: #217346;
}
.add {
  width: 12px;
  margin: 0 auto 0 20px;
}
.add svg {
  display: block;
  width: 12px;
  height: 12px;
}
.hscroll {
  display: flex;
  align-items: center;
  width: 458px;
  margin-right: 12px;
}
.htrack {
  flex: 1;
  height: 10px;
  background: #dadada;
}
.hthumb {
  width: 96%;
  height: 10px;
  border: 1px solid #ababab;
  background: #fff;
}
.status {
  display: flex;
  align-items: center;
  gap: 10px;
  height: 14px;
  padding: 0 6px 0 4px;
  background: #f1f1f1;
}
.stats {
  display: flex;
  gap: 8px;
  margin-left: auto;
}
.views {
  display: flex;
  align-self: stretch;
}
.views button {
  display: grid;
  place-items: center;
  width: 24px;
}
.views svg {
  width: 12px;
  height: 12px;
}
.views .on {
  background: #c8c8c8;
}
.zoom {
  display: flex;
  align-items: center;
  gap: 2px;
  margin-left: -10px;
}
.zoom svg {
  display: block;
  width: 6px;
  height: 6px;
}
.zoom input {
  width: 61px;
  height: 10px;
  appearance: none;
  background: linear-gradient(#999, #999) center / 100% 1px no-repeat;
}
.zoom input::-webkit-slider-thumb {
  appearance: none;
  width: 3px;
  height: 8px;
  background: #555;
}
.taskbar {
  display: flex;
  height: 25px;
  background: #020d17;
  color: #fff;
}
.apps {
  display: grid;
  grid-template-columns: repeat(8, 1fr);
  width: 246px;
  margin-right: auto;
}
.apps button {
  position: relative;
  display: grid;
  place-items: center;
}
.apps svg {
  width: 16px;
  height: 16px;
}
.apps .active {
  background: #3a444c;
}
.apps .open::after,
.apps .active::after {
  content: '';
  position: absolute;
  left: 3px;
  right: 3px;
  bottom: 0;
  height: 1px;
  background: #9fb0bd;
}
.tray {
  display: flex;
  align-items: center;
  gap: 3px;
}
.tray svg {
  width: 12px;
  height: 12px;
}
.clock {
  display: flex;
  flex-direction: column;
  justify-content: center;
  width: 48px;
  text-align: center;
  font-size: 7px;
  line-height: 11px;
}
.menu {
  position: absolute;
  left: 362px;
  top: 52px;
  width: 142px;
  border: 1px solid #c6c6c6;
  background: #fff;
  box-shadow: 1px 1px 2px rgb(0 0 0 / 25%);
}
.menu h3 {
  height: 13px;
  padding-left: 6px;
  background: #ebebeb;
  line-height: 13px;
  font-weight: 500;
}
.choices {
  display: flex;
  gap: 3px;
  height: 36px;
  padding-left: 3px;
}
.choices button {
  display: grid;
  place-items: center start;
  width: 32px;
}
.choices svg {
  width: 28px;
  height: 28px;
}
.choices .hover {
  background: #c6c6c6;
}
.more {
  display: flex;
  align-items: center;
  gap: 6px;
  width: 100%;
  height: 16px;
  padding-left: 2px;
  border-top: 1px solid #e0e0e0;
  font-size: 7px;
}
.more svg {
  width: 11px;
  height: 11px;
}
.tip {
  position: absolute;
  left: 376px;
  top: 98px;
  width: 123px;
  padding: 4px 6px 7px;
  border: 1px solid #c6c6c6;
  background: #fff;
  box-shadow: 1px 1px 2px rgb(0 0 0 / 25%);
  line-height: 9px;
  white-space: nowrap;
}
.tip strong {
  font-weight: 500;
}
.tip p {
  font-size: 7px;
}
.tip p:first-of-type {
  margin: 4px 0 10px;
}
.ring {
  position: absolute;
  pointer-events: none;
}
.ring-tab {
  left: 57px;
  top: 15px;
  width: 64px;
  height: 30px;
}
.ring-item {
  left: 349px;
  top: 66px;
  width: 64px;
  height: 38px;
}
</style>
